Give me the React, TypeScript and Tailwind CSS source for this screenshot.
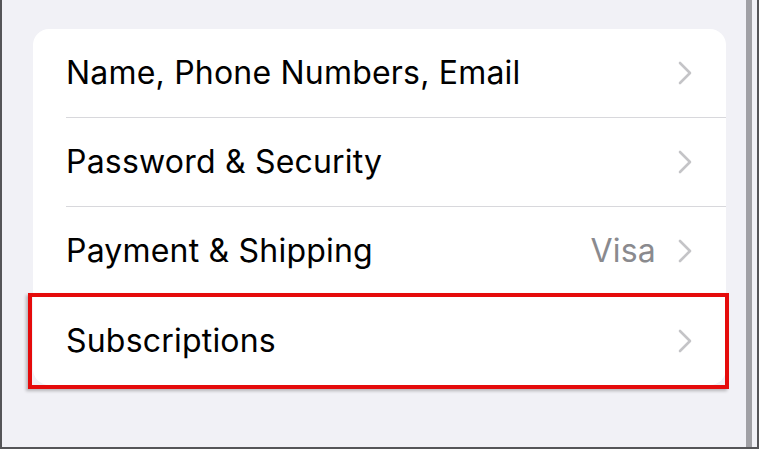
import React from "react";

function Chevron() {
  return (
    <svg width="14" height="24" viewBox="0 0 14 24" fill="none" className="shrink-0">
      <path d="M2 2 L12 12 L2 22" stroke="#c4c4c7" strokeWidth="2.6" strokeLinecap="round" strokeLinejoin="round" />
    </svg>
  );
}

function Row({ label, value, last }: { label: string; value?: string; last?: boolean }) {
  return (
    <div className="flex h-[89px] items-stretch pl-[33px]">
      <div className={`flex flex-1 items-center pr-[34px] ${last ? "" : "border-b border-[#d8d8dc]"}`}>
        <span className="flex-1 text-[32px] tracking-[0.2px] text-black">{label}</span>
        {value && <span className="mr-[22px] text-[32px] tracking-[0.2px] text-[#8a8a8e]">{value}</span>}
        <Chevron />
      </div>
    </div>
  );
}

export default function App() {
  return (
    <div
      className="relative h-[449px] w-[759px] overflow-hidden bg-[#f1f1f6] border-l-2 border-b-2 border-[#555558]"
      style={{ fontFamily: "Inter, 'Noto Sans', sans-serif" }}
    >
      <div className="flex h-full">
        <div className="flex-1 pt-[29px] pl-[31px]">
          <div className="w-[693px] overflow-hidden rounded-[16px] bg-white">
            <Row label="Name, Phone Numbers, Email" />
            <Row label="Password & Security" />
            <Row label="Payment & Shipping" value="Visa" />
            <Row label="Subscriptions" last />
          </div>
        </div>
        <div className="w-[6px] bg-[#a0a0a5]" />
        <div className="w-[5px] bg-[#f1f1f6]" />
        <div className="w-[2px] bg-[#555558]" />
      </div>
      <div className="absolute left-[26px] top-[293px] h-[96px] w-[701px] border-[4px] border-[#e50b0b] shadow-[-2px_2px_3px_rgba(0,0,0,0.25)]" />
    </div>
  );
}
